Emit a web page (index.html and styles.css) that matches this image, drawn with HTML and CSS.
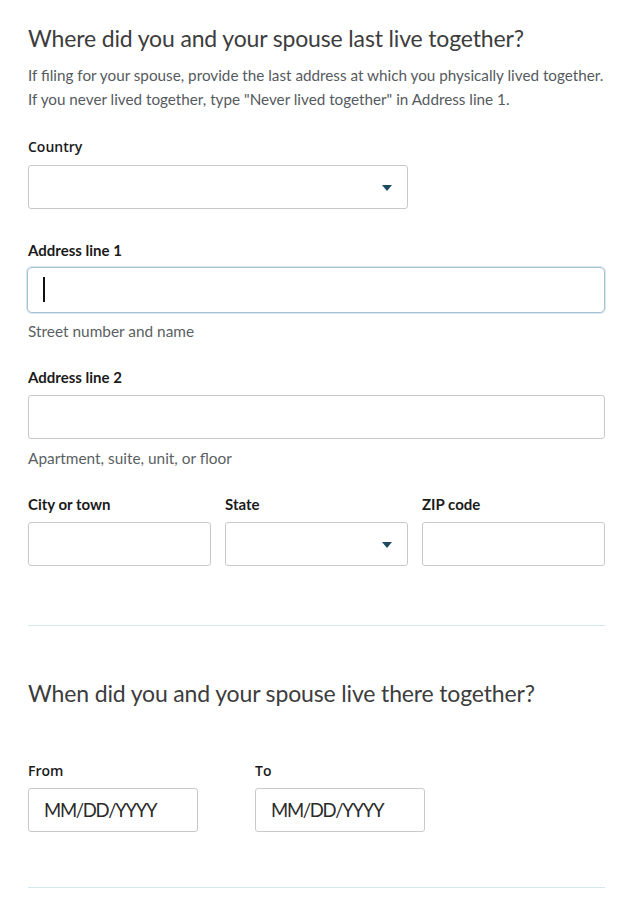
FILE: index.html
```html
<!DOCTYPE html>
<html lang="en">
<head>
<meta charset="utf-8">
<link rel="stylesheet" href="styles.css">
</head>
<body>
<main class="page">
  <section class="section">
    <h2 class="title">Where did you and your spouse last live together?</h2>
    <p class="intro">If filing for your spouse, provide the last address at which you physically lived together.<br>If you never lived together, type "Never lived together" in Address line 1.</p>

    <div class="field field-country">
      <label class="label label-alt">Country</label>
      <div class="box select"><span class="caret-down"></span></div>
    </div>

    <div class="field field-addr1">
      <label class="label">Address line 1</label>
      <div class="box focused"><span class="cursor"></span></div>
      <div class="hint">Street number and name</div>
    </div>

    <div class="field field-addr2">
      <label class="label">Address line 2</label>
      <div class="box"></div>
      <div class="hint hint-2">Apartment, suite, unit, or floor</div>
    </div>

    <div class="row3">
      <div class="field">
        <label class="label">City or town</label>
        <div class="box"></div>
      </div>
      <div class="field">
        <label class="label">State</label>
        <div class="box select"><span class="caret-down"></span></div>
      </div>
      <div class="field">
        <label class="label">ZIP code</label>
        <div class="box"></div>
      </div>
    </div>
  </section>

  <hr class="divider divider-1">

  <section class="section">
    <h2 class="title title-2">When did you and your spouse live there together?</h2>
    <div class="dates">
      <div class="field">
        <label class="label label-alt">From</label>
        <div class="box date">MM/DD/YYYY</div>
      </div>
      <div class="field">
        <label class="label label-alt">To</label>
        <div class="box date">MM/DD/YYYY</div>
      </div>
    </div>
  </section>

  <hr class="divider divider-2">
</main>
</body>
</html>
```

FILE: styles.css
```css
* { box-sizing: border-box; }
html, body { margin: 0; padding: 0; background: #ffffff; }
body {
  font-family: Lato, "Open Sans", sans-serif;
  color: #212121;
}
.page {
  padding: 23px 37px 0 28px;
}
.title {
  margin: 0;
  font-family: Lato, sans-serif;
  font-weight: 400;
  font-size: 23px;
  line-height: 30px;
  color: #3d3d3d;
  letter-spacing: -0.15px;
}
.intro {
  margin: 10px 0 0 0;
  font-size: 15.25px;
  line-height: 24px;
  color: #555a60;
}
.field { display: flex; flex-direction: column; }
.label {
  font-size: 15px;
  font-weight: 700;
  line-height: 20px;
  color: #1b1b1b;
  margin-bottom: 8px;
}
.label-alt { font-family: "Open Sans", sans-serif; font-weight: 600; font-size: 14px; }
.box {
  height: 44px;
  border: 1px solid #c9c9c9;
  border-radius: 3px;
  background: #fff;
  position: relative;
}
.field-country { margin-top: 26px; width: 380px; }
.field-addr1 { margin-top: 31px; }
.field-addr2 { margin-top: 26px; }
.focused {
  height: 46px;
  border: 1px solid #a7c2d3;
  border-radius: 5px;
  box-shadow: 0 0 0 1px #d8e6ee;
  margin-left: -1px;
  margin-top: -1px;
}
.cursor {
  position: absolute;
  left: 15px;
  top: 9px;
  width: 2px;
  height: 25px;
  background: #111;
}
.hint {
  margin-top: 8px;
  font-size: 15.4px;
  line-height: 20px;
  color: #5b5f63;
}
.hint-2 { margin-top: 9px; }
.select .caret-down {
  position: absolute;
  right: 15px;
  top: 19px;
  width: 0;
  height: 0;
  border-left: 5px solid transparent;
  border-right: 5px solid transparent;
  border-top: 6px solid #1e4a62;
}
.row3 {
  margin-top: 26px;
  display: grid;
  grid-template-columns: 183px 183px 183px;
  column-gap: 14px;
}
.divider {
  border: 0;
  border-top: 1px solid #d6e6ee;
  margin: 0;
}
.divider-1 { margin-top: 59px; width: 577px; }
.title-2 { margin-top: 52px; }
.dates {
  margin-top: 53px;
  display: grid;
  grid-template-columns: 170px 170px;
  column-gap: 57px;
}
.dates .label { margin-bottom: 7px; }
.date {
  font-size: 18.5px;
  line-height: 42px;
  padding-left: 15px;
  color: #2a2a2a;
  letter-spacing: -1.3px;
}
.divider-2 { margin-top: 55px; width: 577px; }
```
